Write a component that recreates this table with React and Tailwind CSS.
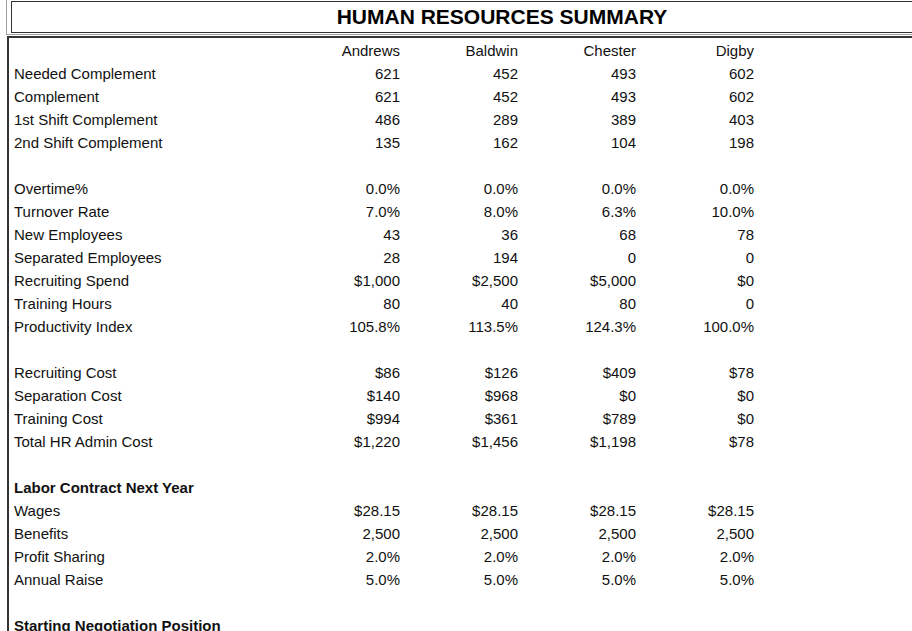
import React from 'react';

const teams = ['Andrews', 'Baldwin', 'Chester', 'Digby'];

const rows = [
    ['Needed Complement', '621', '452', '493', '602'],
    ['Complement', '621', '452', '493', '602'],
    ['1st Shift Complement', '486', '289', '389', '403'],
    ['2nd Shift Complement', '135', '162', '104', '198'],
    null,
    ['Overtime%', '0.0%', '0.0%', '0.0%', '0.0%'],
    ['Turnover Rate', '7.0%', '8.0%', '6.3%', '10.0%'],
    ['New Employees', '43', '36', '68', '78'],
    ['Separated Employees', '28', '194', '0', '0'],
    ['Recruiting Spend', '$1,000', '$2,500', '$5,000', '$0'],
    ['Training Hours', '80', '40', '80', '0'],
    ['Productivity Index', '105.8%', '113.5%', '124.3%', '100.0%'],
    null,
    ['Recruiting Cost', '$86', '$126', '$409', '$78'],
    ['Separation Cost', '$140', '$968', '$0', '$0'],
    ['Training Cost', '$994', '$361', '$789', '$0'],
    ['Total HR Admin Cost', '$1,220', '$1,456', '$1,198', '$78'],
    null,
    ['Labor Contract Next Year'],
    ['Wages', '$28.15', '$28.15', '$28.15', '$28.15'],
    ['Benefits', '2,500', '2,500', '2,500', '2,500'],
    ['Profit Sharing', '2.0%', '2.0%', '2.0%', '2.0%'],
    ['Annual Raise', '5.0%', '5.0%', '5.0%', '5.0%'],
    null,
    ['Starting Negotiation Position'],
];

const Row = ({ cells }) => {
    if (!cells) return <div className="h-[23px]" />;
    if (cells.length === 1) {
        return (
            <div className="h-[23px] leading-[23px] font-bold whitespace-nowrap">{cells[0]}</div>
        );
    }
    return (
        <div className="grid grid-cols-[268px_70px_70px_70px_70px] gap-x-[48px] h-[23px] leading-[23px] whitespace-nowrap">
            <div>{cells[0]}</div>
            {cells.slice(1).map((v, i) => (
                <div key={i} className="text-right">{v}</div>
            ))}
        </div>
    );
};

const App = () => {
    return (
        <div className="w-[912px] h-[631px] overflow-hidden bg-white text-[#111] font-['Liberation_Sans',Arial,sans-serif]">
            {/* title block */}
            <div className="ml-[6px] w-[1100px] border-l border-b border-[#a0a0a0] pl-[4px] py-[1px]">
                <div className="w-[982px] h-[32px] border border-[#333] flex items-center justify-center text-[21px] font-bold text-black">
                    HUMAN RESOURCES SUMMARY
                </div>
            </div>

            {/* summary table */}
            <div className="mt-[1px] ml-[7px] w-[1100px] h-[700px] border-t-2 border-l-2 border-[#333] pl-[5px] pt-[1px] text-[15px]">
                <div className="grid grid-cols-[268px_70px_70px_70px_70px] gap-x-[48px] h-[23px] leading-[23px]">
                    <div />
                    {teams.map((t) => (
                        <div key={t} className="text-right">{t}</div>
                    ))}
                </div>
                {rows.map((r, i) => (
                    <Row key={i} cells={r} />
                ))}
            </div>
        </div>
    );
};

export default App;
